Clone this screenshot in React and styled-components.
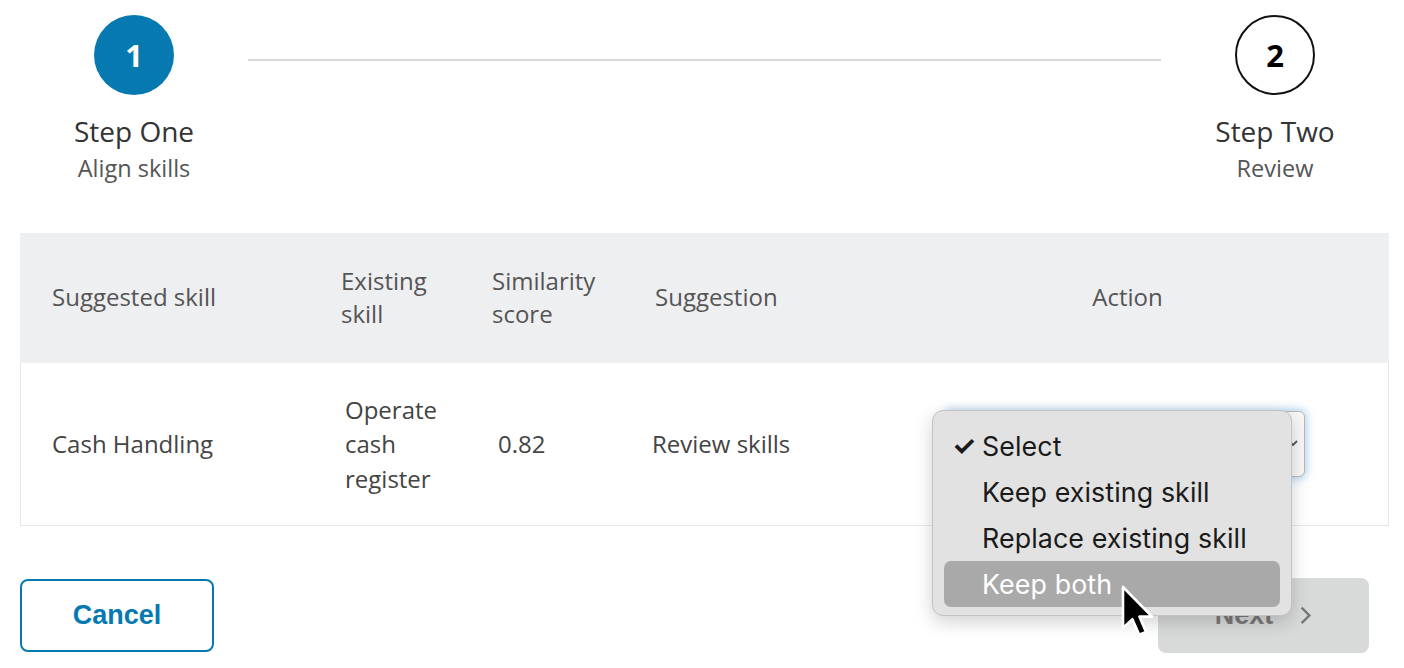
import React from 'react';
import styled, { createGlobalStyle } from 'styled-components';

const GlobalStyle = createGlobalStyle`
  body {
    margin: 0;
    background: #ffffff;
    font-family: "Open Sans", "Liberation Sans", sans-serif;
  }
`;

const blue = '#0679b1';

const Page = styled.div`
  position: relative;
  width: 1404px;
  height: 668px;
  padding: 15px 15px 0 20px;
  box-sizing: border-box;
  overflow: hidden;
`;

const Stepper = styled.div`
  display: flex;
  align-items: flex-start;
  width: 1369px;
`;

const Step = styled.div`
  width: 228px;
  flex: none;
  display: flex;
  flex-direction: column;
  align-items: center;
`;

const Circle = styled.div`
  width: 80px;
  height: 80px;
  box-sizing: border-box;
  border-radius: 50%;
  display: flex;
  align-items: center;
  justify-content: center;
  font-family: "Open Sans", sans-serif;
  font-weight: 700;
  font-size: 31px;
  background: ${(p) => (p.active ? blue : '#ffffff')};
  color: ${(p) => (p.active ? '#ffffff' : '#000000')};
  border: ${(p) => (p.active ? 'none' : '2px solid #111111')};
`;

const StepTitle = styled.div`
  margin-top: 18px;
  font-size: 28px;
  line-height: 36px;
  color: #333333;
`;

const StepSub = styled.div`
  padding-top: 2px;
  font-size: 23.5px;
  line-height: 35px;
  color: #555555;
`;

const Connector = styled.div`
  flex: 1;
  height: 2px;
  margin-top: 44px;
  background: #d8d8d8;
`;

const Table = styled.div`
  margin-top: 47px;
  width: 1369px;
`;

const cols = '289px 151px 163px 243px 1fr';

const HeadRow = styled.div`
  display: grid;
  grid-template-columns: ${cols};
  align-items: center;
  height: 130px;
  background: #eeeff1;
`;

const BodyRow = styled.div`
  display: grid;
  grid-template-columns: ${cols};
  align-items: center;
  height: 163px;
  border: 1px solid #e6e6e6;
  border-top: none;
  box-sizing: border-box;
`;

const Cell = styled.div`
  padding-left: ${(p) => p.pad || 32}px;
  font-size: 24px;
  line-height: ${(p) => (p.head ? 33.5 : 34.5)}px;
  color: ${(p) => (p.head ? '#555555' : '#444444')};
  text-align: ${(p) => (p.center ? 'center' : 'left')};
  ${(p) => p.center && 'padding-left: 0;'}
  margin-top: ${(p) => (p.head ? -2 : 1)}px;
`;

const SelectWrap = styled.div`
  position: relative;
  width: 360px;
  height: 66px;
  margin-left: 78px;
`;

const SelectBox = styled.div`
  width: 100%;
  height: 100%;
  box-sizing: border-box;
  border: 1px solid #b9b9b9;
  border-radius: 6px;
  background: #f7f7f7;
  box-shadow: 0 0 9px 2px rgba(120, 175, 225, 0.55);
  display: flex;
  align-items: center;
  justify-content: flex-end;
  padding-right: 6px;
`;

const Menu = styled.div`
  position: absolute;
  top: -1px;
  left: -13px;
  width: 360px;
  height: 206px;
  box-sizing: border-box;
  padding: 12px 11px 0;
  background: #e2e2e2;
  border: 1px solid #c3c3c3;
  border-radius: 11px;
  box-shadow: 0 6px 18px rgba(0, 0, 0, 0.18);
  z-index: 5;
`;

const Option = styled.div`
  position: relative;
  height: 46px;
  display: flex;
  align-items: center;
  padding-left: 38px;
  border-radius: 7px;
  font-family: "Inter", "Liberation Sans", sans-serif;
  font-size: 26.8px;
  letter-spacing: 0.1px;
  color: ${(p) => (p.hover ? '#ffffff' : '#1a1a1a')};
  background: ${(p) => (p.hover ? '#a9a9a9' : 'transparent')};
`;

const Check = styled.span`
  position: absolute;
  left: 8px;
  top: 50%;
  transform: translateY(-52%);
  font-size: 27px;
  font-weight: 700;
`;

const Actions = styled.div`
  margin-top: 52px;
  width: 1349px;
  display: flex;
  align-items: center;
  justify-content: space-between;
`;

const Button = styled.div`
  box-sizing: border-box;
  display: flex;
  align-items: center;
  justify-content: center;
  gap: 26px;
  border-radius: 8px;
  font-family: "Liberation Sans", Arial, sans-serif;
  font-weight: 700;
  font-size: 27px;
  width: ${(p) => p.w}px;
  height: ${(p) => p.h}px;
  color: ${(p) => (p.outline ? blue : '#7a7a7a')};
  background: ${(p) => (p.outline ? '#ffffff' : '#d8d9d9')};
  border: ${(p) => (p.outline ? `2px solid ${blue}` : 'none')};
`;

const Cursor = styled.svg`
  position: absolute;
  left: 1120px;
  top: 584px;
  z-index: 10;
`;

const Chevron = ({ size = 14, color = '#777', dir = 'right' }) => (
  <svg width={size} height={size * 1.6} viewBox="0 0 10 16">
    {dir === 'right' ? (
      <path d="M2 2 L8 8 L2 14" fill="none" stroke={color} strokeWidth="1.8" />
    ) : (
      <path d="M1 5 L5 9 L9 5" fill="none" stroke={color} strokeWidth="1.8" />
    )}
  </svg>
);

const App = () => (
  <>
    <GlobalStyle />
    <Page>
      <Stepper>
        <Step>
          <Circle active>1</Circle>
          <StepTitle>Step One</StepTitle>
          <StepSub>Align skills</StepSub>
        </Step>
        <Connector />
        <Step>
          <Circle>2</Circle>
          <StepTitle>Step Two</StepTitle>
          <StepSub>Review</StepSub>
        </Step>
      </Stepper>

      <Table>
        <HeadRow>
          <Cell head>Suggested skill</Cell>
          <Cell head>Existing skill</Cell>
          <Cell head>Similarity score</Cell>
          <Cell head>Suggestion</Cell>
          <Cell head center>Action</Cell>
        </HeadRow>
        <BodyRow>
          <Cell pad={31}>Cash Handling</Cell>
          <Cell pad={35}>Operate cash register</Cell>
          <Cell pad={37}>0.82</Cell>
          <Cell pad={28}>Review skills</Cell>
          <div>
            <SelectWrap>
              <SelectBox>
                <Chevron size={10} color="#555" dir="down" />
              </SelectBox>
              <Menu>
                <Option>
                  <Check>✓</Check>Select
                </Option>
                <Option>Keep existing skill</Option>
                <Option>Replace existing skill</Option>
                <Option hover>Keep both</Option>
              </Menu>
            </SelectWrap>
          </div>
        </BodyRow>
      </Table>

      <Actions>
        <Button outline w={194} h={73}>
          Cancel
        </Button>
        <Button w={211} h={75}>
          Next
          <Chevron size={13} color="#777" />
        </Button>
      </Actions>

      <Cursor width="38" height="56" viewBox="0 0 19 28">
        <path
          d="M1.5 1.5 L1.5 22 L6.2 17.6 L9.6 25.4 L13 24 L9.7 16.3 L16 16.3 Z"
          fill="#000"
          stroke="#fff"
          strokeWidth="1.3"
          strokeLinejoin="round"
        />
      </Cursor>
    </Page>
  </>
);

export default App;
